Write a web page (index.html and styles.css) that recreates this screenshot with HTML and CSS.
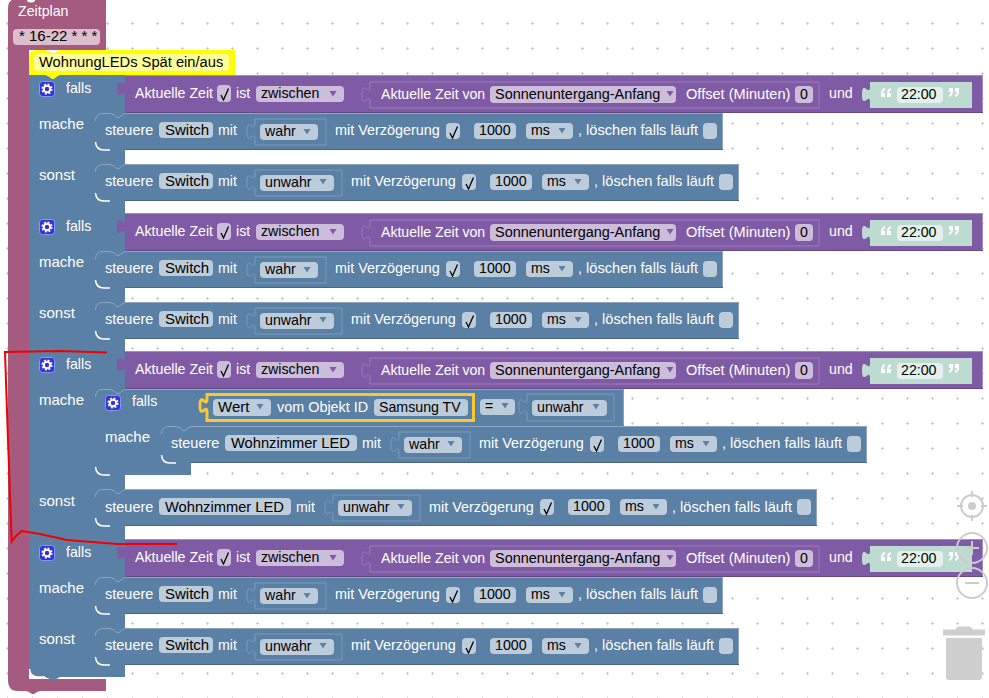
FILE: index.html
```html
<!DOCTYPE html>
<html lang="de">
<head>
<meta charset="utf-8">
<title>Zeitplan</title>
<link rel="stylesheet" href="styles.css">
</head>
<body>
<svg class="canvas" width="989" height="698" viewBox="0 0 989 698" xmlns="http://www.w3.org/2000/svg">
<defs>
<pattern id="grid" x="0" y="0" width="25" height="25" patternUnits="userSpaceOnUse"><path class="dot" d="M6 23.500h3M7.500 22v3"/></pattern>
<path id="chk" class="check" d="M3 9 5.500 14 10.500 2.500"/>
<path id="ab" class="arrow-b" d="M-3.500 -2h7l-3.500 5.500z"/>
<path id="ap" class="arrow-p" d="M-3.500 -2h7l-3.500 5.500z"/>
<g id="gear"><rect class="gear-bg" x=".5" y=".5" width="15" height="15" rx="3"/><circle class="gear-ring" cx="8" cy="8" r="3.200"/><circle class="gear-teeth" cx="8" cy="8" r="4.800"/></g>
<g id="quotes"><path class="quote" d="M885 88q-4 1-4 6v3h4v-4h-2q0-2 2-3zM891 88q-4 1-4 6v3h4v-4h-2q0-2 2-3zM949 97q4-1 4-6v-3h-4v4h2q0 2-2 3zM955 97q4-1 4-6v-3h-4v4h2q0 2-2 3z"/></g>
<g id="shapes">
<path class="purple" d="M125 75V81c0,10 -8,-8 -8,7.500s8,-2.500 8,7.500V113H983V75Z"/>
<path class="edge-p" d="M125 75.500H982.500V112"/><path class="edge-pd" d="M125 112.500H983"/>
<path class="purple-in" d="M370 82V87c0,10 -8,-8 -8,7.500s8,-2.500 8,7.500V108H819V82Z"/>
<path class="green" d="M870 82V87c0,10 -8,-8 -8,7.500s8,-2.500 8,7.500V108H972V82Z"/>
<rect class="pill-g" x="897" y="87" width="46" height="16" rx="4"/>
<use href="#quotes"/>
<use href="#gear" x="39" y="81"/>
<rect class="pill-p" x="217" y="85" width="14" height="17" rx="4"/><use href="#chk" x="218" y="86"/>
<rect class="pill-p" x="256" y="86" width="88" height="16" rx="4"/><use href="#ap" x="333" y="93"/>
<rect class="pill-p" x="490" y="86" width="186" height="17" rx="4"/><use href="#ap" x="670" y="93"/>
<rect class="pill-p" x="795" y="86" width="18" height="17" rx="4"/>
</g>
<g id="row-wahr">
<path class="blue" d="M95 121Q95 113 103 113H110q5 1 7 4h2q3-3 6-4H723V150H125q-3 1-6 4h-2q-3-3-7-4H103Q95 150 95 142Z"/>
<path class="edge-b" d="M95.500 121Q95.500 113.500 103 113.500H110q5 1 7 4h2q3-3 6-4H722.500V149"/><path class="edge-w" d="M95.500 142Q96 150 104 150H110"/><path class="edge-bd" d="M125 149.500H723"/>
<rect class="pill-b" x="159" y="122" width="54" height="16" rx="4"/>
<path class="blue-in" d="M255 119V124c0,10 -8,-8 -8,7.500s8,-2.500 8,7.500V145H326V119Z"/>
<rect class="pill-b" x="260" y="124" width="58" height="16" rx="4"/><use href="#ab" x="307" y="131"/>
<rect class="pill-b" x="446" y="123" width="14" height="16" rx="4"/><use href="#chk" x="447" y="124"/>
<rect class="pill-b" x="474" y="123" width="42" height="16" rx="4"/>
<rect class="pill-b" x="526" y="123" width="47" height="16" rx="4"/><use href="#ab" x="562" y="130"/>
<rect class="pill-b" x="703" y="123" width="14" height="16" rx="4"/>
</g>
<g id="row-unwahr">
<path class="blue" d="M95 172Q95 164 103 164H110q5 1 7 4h2q3-3 6-4H739V201H125q-3 1-6 4h-2q-3-3-7-4H103Q95 201 95 193Z"/>
<path class="edge-b" d="M95.500 172Q95.500 164.500 103 164.500H110q5 1 7 4h2q3-3 6-4H738.500V200"/><path class="edge-w" d="M95.500 193Q96 201 104 201H110"/><path class="edge-bd" d="M125 200.500H739"/>
<rect class="pill-b" x="159" y="173" width="54" height="16" rx="4"/>
<path class="blue-in" d="M255 170V175c0,10 -8,-8 -8,7.500s8,-2.500 8,7.500V196H342V170Z"/>
<rect class="pill-b" x="260" y="175" width="74" height="16" rx="4"/><use href="#ab" x="323" y="181"/>
<rect class="pill-b" x="462" y="174" width="14" height="16" rx="4"/><use href="#chk" x="463" y="175"/>
<rect class="pill-b" x="490" y="174" width="42" height="16" rx="4"/>
<rect class="pill-b" x="542" y="174" width="47" height="16" rx="4"/><use href="#ab" x="578" y="181"/>
<rect class="pill-b" x="719" y="174" width="14" height="16" rx="4"/>
</g>
<path id="arm" class="blue" d="M29 75H125V213H60q-3 1-6 4h-2q-3-3-7-4H29Z"/>
<path id="arm-last" class="blue" d="M29 75H125V213H60q-3 1-6 4h-2q-3-3-7-4H37Q29 213 29 205Z"/>
</defs>

<rect width="989" height="698" fill="url(#grid)"/>

<path class="hat" d="M8 8Q8 2 12 0H106V50H29V679H106V691H40q-3 .5-6 3h-2q-3-2.500-6-3H18Q8 691 8 681Z"/>
<ellipse class="hole" cx="31" cy="0" rx="4" ry="2.500"/>
<text class="lbl" x="18" y="16">Zeitplan</text>
<rect class="pill-h" x="13" y="29" width="87" height="16" rx="4"/>
<text class="val cron" x="19" y="41">* 16-22 * * *</text>

<!-- block 1 -->
<g>
<use href="#arm"/>
<use href="#shapes"/><use href="#row-wahr"/><use href="#row-unwahr"/>
<text class="lbl" x="66" y="93">falls</text><text class="lbl s-big" x="39" y="129">mache</text><text class="lbl s-big" x="39" y="180">sonst</text>
<text class="lbl" x="135" y="98">Aktuelle Zeit</text><text class="lbl" x="236" y="98">ist</text><text class="val" x="261" y="98">zwischen</text>
<text class="lbl s-nar" x="381" y="99">Aktuelle Zeit von</text><text class="val s-son" x="495" y="99">Sonnenuntergang-Anfang</text><text class="lbl s-off" x="686" y="99">Offset (Minuten)</text><text class="val" x="800" y="99">0</text><text class="lbl" x="829" y="98">und</text><text class="val" x="901" y="99">22:00</text>
<text class="lbl s-st" x="105" y="135">steuere</text><text class="val s-big" x="165" y="135">Switch</text><text class="lbl" x="218" y="135">mit</text><text class="val" x="265" y="136">wahr</text><text class="lbl s-mv" x="335" y="135">mit Verzögerung</text><text class="val" x="479" y="135">1000</text><text class="val" x="531" y="135">ms</text><text class="lbl s-off" x="578" y="135">, löschen falls läuft</text>
<text class="lbl s-st" x="105" y="186">steuere</text><text class="val s-big" x="165" y="186">Switch</text><text class="lbl" x="218" y="186">mit</text><text class="val" x="265" y="187">unwahr</text><text class="lbl s-mv" x="351" y="186">mit Verzögerung</text><text class="val" x="495" y="186">1000</text><text class="val" x="547" y="186">ms</text><text class="lbl s-off" x="594" y="186">, löschen falls läuft</text>
</g>

<!-- block 2 -->
<g transform="translate(0,138)">
<use href="#arm"/>
<use href="#shapes"/><use href="#row-wahr"/><use href="#row-unwahr"/>
<text class="lbl" x="66" y="93">falls</text><text class="lbl s-big" x="39" y="129">mache</text><text class="lbl s-big" x="39" y="180">sonst</text>
<text class="lbl" x="135" y="98">Aktuelle Zeit</text><text class="lbl" x="236" y="98">ist</text><text class="val" x="261" y="98">zwischen</text>
<text class="lbl s-nar" x="381" y="99">Aktuelle Zeit von</text><text class="val s-son" x="495" y="99">Sonnenuntergang-Anfang</text><text class="lbl s-off" x="686" y="99">Offset (Minuten)</text><text class="val" x="800" y="99">0</text><text class="lbl" x="829" y="98">und</text><text class="val" x="901" y="99">22:00</text>
<text class="lbl s-st" x="105" y="135">steuere</text><text class="val s-big" x="165" y="135">Switch</text><text class="lbl" x="218" y="135">mit</text><text class="val" x="265" y="136">wahr</text><text class="lbl s-mv" x="335" y="135">mit Verzögerung</text><text class="val" x="479" y="135">1000</text><text class="val" x="531" y="135">ms</text><text class="lbl s-off" x="578" y="135">, löschen falls läuft</text>
<text class="lbl s-st" x="105" y="186">steuere</text><text class="val s-big" x="165" y="186">Switch</text><text class="lbl" x="218" y="186">mit</text><text class="val" x="265" y="187">unwahr</text><text class="lbl s-mv" x="351" y="186">mit Verzögerung</text><text class="val" x="495" y="186">1000</text><text class="val" x="547" y="186">ms</text><text class="lbl s-off" x="594" y="186">, löschen falls läuft</text>
</g>

<!-- block 3 -->
<g transform="translate(0,276)">
<path class="blue" d="M29 75H125V263H60q-3 1-6 4h-2q-3-3-7-4H29Z"/>
<use href="#shapes"/>
<text class="lbl" x="66" y="93">falls</text><text class="lbl s-big" x="39" y="129">mache</text><text class="lbl s-big" x="39" y="230">sonst</text>
<text class="lbl" x="135" y="98">Aktuelle Zeit</text><text class="lbl" x="236" y="98">ist</text><text class="val" x="261" y="98">zwischen</text>
<text class="lbl s-nar" x="381" y="99">Aktuelle Zeit von</text><text class="val s-son" x="495" y="99">Sonnenuntergang-Anfang</text><text class="lbl s-off" x="686" y="99">Offset (Minuten)</text><text class="val" x="800" y="99">0</text><text class="lbl" x="829" y="98">und</text><text class="val" x="901" y="99">22:00</text>
</g>

<!-- nested if -->
<path class="blue" d="M95 397Q95 389 103 389H110q5 1 7 4h2q3-3 6-4H191V475H125q-3 1-6 4h-2q-3-3-7-4H103Q95 475 95 467Z"/>
<path class="edge-b" d="M95.500 397Q95.500 389.500 103 389.500H110q5 1 7 4h2q3-3 6-4H191"/><path class="edge-w" d="M95.500 467Q96 475 104 475H110"/>
<path class="blue" d="M191 389V395c0,10 -8,-8 -8,7.500s8,-2.500 8,7.500V426H624V389Z"/>
<path class="edge-b" d="M191 389.500H623.500V425"/>
<use href="#gear" x="105" y="395"/>
<text class="lbl" x="132" y="406">falls</text><text class="lbl s-big" x="105" y="442">mache</text>
<path class="selected" d="M207 394.500V399c0,9 -7,-7 -7,6.500s7,-2 7,6.500V420.500H473.500V394.500Z"/>
<rect class="pill-b" x="213" y="399" width="58" height="17" rx="4"/><use href="#ab" x="260" y="406"/>
<text class="val s-big" x="218" y="412">Wert</text><text class="lbl s-mv" x="277" y="412">vom Objekt ID</text>
<rect class="pill-b" x="374" y="399" width="94" height="17" rx="4"/><text class="val" x="379" y="412">Samsung TV</text>
<rect class="pill-b" x="480" y="399" width="35" height="16" rx="4"/><text class="val" x="485" y="411">=</text><use href="#ab" x="505" y="405"/>
<path class="blue-in" d="M527 394V399c0,10 -8,-8 -8,7.500s8,-2.500 8,7.500V421H614V394Z"/>
<rect class="pill-b" x="532" y="400" width="75" height="16" rx="4"/><text class="val" x="537" y="412">unwahr</text><use href="#ab" x="596" y="406"/>

<path class="blue" d="M161 434Q161 426 169 426H176q5 1 7 4h2q3-3 6-4H867V463H191q-3 1-6 4h-2q-3-3-7-4H169Q161 463 161 455Z"/>
<path class="edge-b" d="M161.500 434Q161.500 426.500 169 426.500H176q5 1 7 4h2q3-3 6-4H866.500V462"/><path class="edge-w" d="M161.500 455Q162 463 170 463H176"/><path class="edge-bd" d="M191 462.500H867"/>
<text class="lbl s-st" x="171" y="448">steuere</text>
<rect class="pill-b" x="225" y="435" width="132" height="16" rx="4"/><text class="val s-wide" x="231" y="448">Wohnzimmer LED</text>
<text class="lbl" x="362" y="448">mit</text>
<path class="blue-in" d="M399 432V437c0,10 -8,-8 -8,7.500s8,-2.500 8,7.500V458H470V432Z"/>
<rect class="pill-b" x="404" y="437" width="58" height="16" rx="4"/><text class="val" x="409" y="449">wahr</text><use href="#ab" x="451" y="443"/>
<text class="lbl s-mv" x="479" y="448">mit Verzögerung</text>
<rect class="pill-b" x="590" y="436" width="14" height="16" rx="4"/><use href="#chk" x="591" y="437"/>
<rect class="pill-b" x="618" y="436" width="42" height="16" rx="4"/><text class="val" x="623" y="448">1000</text>
<rect class="pill-b" x="670" y="436" width="47" height="16" rx="4"/><text class="val" x="675" y="448">ms</text><use href="#ab" x="706" y="443"/>
<text class="lbl s-off" x="722" y="448">, löschen falls läuft</text>
<rect class="pill-b" x="847" y="436" width="14" height="16" rx="4"/>

<path class="blue" d="M95 497Q95 489 103 489H110q5 1 7 4h2q3-3 6-4H817V526H125q-3 1-6 4h-2q-3-3-7-4H103Q95 526 95 518Z"/>
<path class="edge-b" d="M95.500 497Q95.500 489.500 103 489.500H110q5 1 7 4h2q3-3 6-4H816.500V525"/><path class="edge-w" d="M95.500 518Q96 526 104 526H110"/><path class="edge-bd" d="M125 525.500H817"/>
<text class="lbl s-st" x="105" y="512">steuere</text>
<rect class="pill-b" x="159" y="498" width="132" height="17" rx="4"/><text class="val s-wide" x="165" y="512">Wohnzimmer LED</text>
<text class="lbl" x="296" y="512">mit</text>
<path class="blue-in" d="M333 495V500c0,10 -8,-8 -8,7.500s8,-2.500 8,7.500V521H420V495Z"/>
<rect class="pill-b" x="338" y="500" width="74" height="16" rx="4"/><text class="val" x="343" y="512">unwahr</text><use href="#ab" x="401" y="506"/>
<text class="lbl s-mv" x="429" y="512">mit Verzögerung</text>
<rect class="pill-b" x="540" y="499" width="14" height="16" rx="4"/><use href="#chk" x="541" y="500"/>
<rect class="pill-b" x="568" y="499" width="42" height="16" rx="4"/><text class="val" x="573" y="511">1000</text>
<rect class="pill-b" x="620" y="499" width="47" height="16" rx="4"/><text class="val" x="625" y="511">ms</text><use href="#ab" x="656" y="506"/>
<text class="lbl s-off" x="672" y="512">, löschen falls läuft</text>
<rect class="pill-b" x="797" y="499" width="14" height="16" rx="4"/>

<!-- block 4 -->
<g transform="translate(0,464)">
<use href="#arm-last"/>
<use href="#shapes"/><use href="#row-wahr"/><use href="#row-unwahr"/>
<path class="edge-w" d="M29.500 205Q30 213 38 213H45"/>
<text class="lbl" x="66" y="93">falls</text><text class="lbl s-big" x="39" y="129">mache</text><text class="lbl s-big" x="39" y="180">sonst</text>
<text class="lbl" x="135" y="98">Aktuelle Zeit</text><text class="lbl" x="236" y="98">ist</text><text class="val" x="261" y="98">zwischen</text>
<text class="lbl s-nar" x="381" y="99">Aktuelle Zeit von</text><text class="val s-son" x="495" y="99">Sonnenuntergang-Anfang</text><text class="lbl s-off" x="686" y="99">Offset (Minuten)</text><text class="val" x="800" y="99">0</text><text class="lbl" x="829" y="98">und</text><text class="val" x="901" y="99">22:00</text>
<text class="lbl s-st" x="105" y="135">steuere</text><text class="val s-big" x="165" y="135">Switch</text><text class="lbl" x="218" y="135">mit</text><text class="val" x="265" y="136">wahr</text><text class="lbl s-mv" x="335" y="135">mit Verzögerung</text><text class="val" x="479" y="135">1000</text><text class="val" x="531" y="135">ms</text><text class="lbl s-off" x="578" y="135">, löschen falls läuft</text>
<text class="lbl s-st" x="105" y="186">steuere</text><text class="val s-big" x="165" y="186">Switch</text><text class="lbl" x="218" y="186">mit</text><text class="val" x="265" y="187">unwahr</text><text class="lbl s-mv" x="351" y="186">mit Verzögerung</text><text class="val" x="495" y="186">1000</text><text class="val" x="547" y="186">ms</text><text class="lbl s-off" x="594" y="186">, löschen falls läuft</text>
</g>

<!-- comment block -->
<path class="yellow" d="M29 58Q29 50 37 50H45q4 1 7 3h2q3-2 6-3H235V75H60q-3 1-6 4h-2q-3-3-7-4H29Z"/>
<rect class="pill-y" x="34" y="54" width="195" height="17" rx="4"/>
<text class="val s-wide" x="39" y="67">WohnungLEDs Spät ein/aus</text>

<!-- hand-drawn marking -->
<path class="red" d="M107 352.500 60 351 5 352 8 440 11.700 541.700 16 536 21.700 531 40 534 67 540 117 544 177 544"/>

<!-- workspace controls -->
<g class="controls">
<circle cx="972" cy="506" r="11"/><path d="M972 491v6M972 515v6M957 506h6M981 506h6"/><circle class="solid" cx="972" cy="506" r="4"/>
<circle cx="972" cy="548" r="15"/><path d="M965 548h14M972 541v14"/>
<circle cx="972" cy="583" r="15"/><path d="M965 583h14"/>
</g>
<path class="trash" d="M955 629.500l3-3h12l3 3h12v6H943v-6ZM946 638h36v39q0 3-3 3h-30q-3 0-3-3Z"/>
</svg>
</body>
</html>
```

FILE: styles.css
```css
html, body { margin: 0; padding: 0; background: #fff; overflow: hidden; }
.canvas { display: block; }
text { font-family: "Liberation Sans", Arial, sans-serif; font-size: 14.2px; }
.s-big { font-size: 15px; }
.s-st { font-size: 14.5px; }
.s-nar { font-size: 14.1px; }
.s-mv { font-size: 14.4px; }
.s-son { font-size: 14.45px; }
.s-off { font-size: 14.6px; }
.s-wide { font-size: 14.7px; }
.cron { font-size: 15px; }
.lbl { fill: #fff; }
.val { fill: #000; }
.dot { fill: none; stroke: #ccc; stroke-width: 1; }
.hat { fill: #a55b80; }
.hole { fill: #fff; }
.blue { fill: #5b80a5; }
.purple { fill: #805ba5; }
.purple-in { fill: #805ba5; stroke: #9a7dbb; stroke-width: 1; }
.blue-in { fill: #5b80a5; stroke: #7c99b7; stroke-width: 1; }
.green { fill: #bedbd1; }
.yellow { fill: #ffff00; }
.pill-b { fill: #bdccdb; }
.pill-p { fill: #ccbddb; }
.pill-g { fill: #e3f0ec; }
.pill-h { fill: #dbbdcc; }
.pill-y { fill: #ffff99; }
.edge-p { fill: none; stroke: #a68cc0; stroke-width: 1; }
.edge-pd { fill: none; stroke: #664984; stroke-width: 1; }
.edge-b { fill: none; stroke: #8ca6c0; stroke-width: 1; }
.edge-bd { fill: none; stroke: #496684; stroke-width: 1; }
.edge-w { fill: none; stroke: #fff; stroke-width: 1.500; }
.check { fill: none; stroke: #000; stroke-width: 1.300; }
.arrow-b { fill: #5b80a5; }
.arrow-p { fill: #805ba5; }
.gear-bg { fill: #3333dd; stroke: #8899ee; stroke-width: 1; }
.gear-ring { fill: none; stroke: #fff; stroke-width: 2; }
.gear-teeth { fill: none; stroke: #fff; stroke-width: 1.500; stroke-dasharray: 2 1.770; }
.quote { fill: #fff; }
.selected { fill: #5b80a5; stroke: #f9c72e; stroke-width: 3; }
.red { fill: none; stroke: #f00000; stroke-width: 2; }
.controls { fill: none; stroke: #ccc; stroke-width: 2; }
.controls .solid { fill: #ccc; stroke: none; }
.trash { fill: #ccc; opacity: .95; }
```
